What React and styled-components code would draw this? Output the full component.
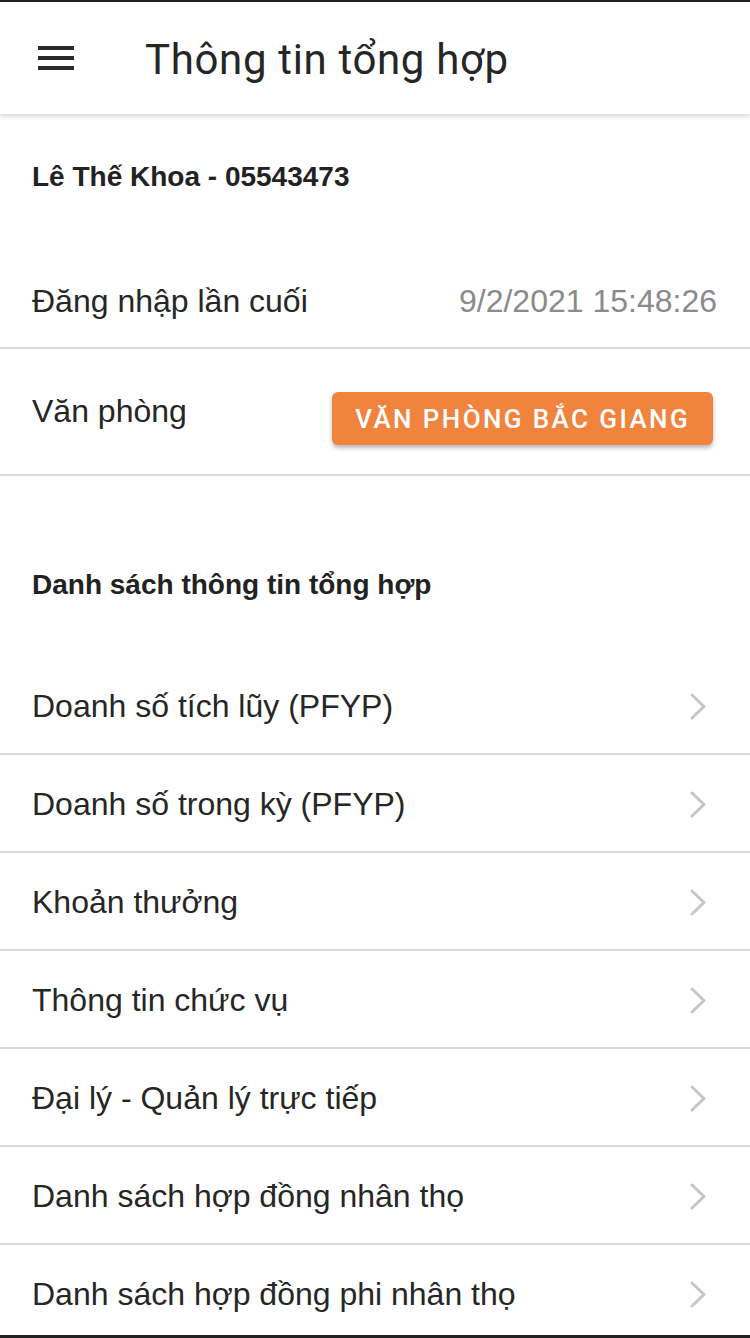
import React from 'react'
import styled, { createGlobalStyle } from 'styled-components'

const TEXT = '#262626'
const LINE = '#dadada'
const ORANGE = '#f0843f'

const GlobalStyle = createGlobalStyle`
  html, body {
    margin: 0;
    padding: 0;
    background: #ffffff;
  }
  body {
    font-family: "Liberation Sans", Arial, sans-serif;
    color: ${TEXT};
  }
`

const Frame = styled.div`
  height: 1338px;
  box-sizing: border-box;
  border-top: 2px solid #222;
  border-bottom: 3px solid #222;
  overflow: hidden;
  display: flex;
  flex-direction: column;
  background: #fff;
`

const Toolbar = styled.header`
  flex: none;
  height: 112px;
  display: flex;
  align-items: center;
  padding-left: 38px;
  background: #fff;
  box-shadow: 0 2px 5px rgba(0, 0, 0, 0.18);
  position: relative;
  z-index: 1;
`

const MenuButton = styled.button`
  width: 36px;
  height: 24px;
  padding: 0;
  border: 0;
  background: transparent;
  display: flex;
  flex-direction: column;
  justify-content: space-between;
  cursor: pointer;

  span {
    display: block;
    height: 4px;
    background: #2a2a2a;
  }
`

const Title = styled.h1`
  margin: 2px 0 0 71px;
  font-family: Roboto, "Liberation Sans", sans-serif;
  font-weight: 400;
  font-size: 42px;
  color: #262626;
  letter-spacing: 0.65px;
`

const Body = styled.main`
  flex: 1;
  display: flex;
  flex-direction: column;
`

const Heading = styled.div`
  padding: ${({ top }) => top}px 32px ${({ bottom }) => bottom}px;
  font-weight: 700;
  font-size: 28px;
  line-height: 30px;
  color: #222;
`

const InfoRow = styled.div`
  height: ${({ height }) => height}px;
  display: flex;
  align-items: center;
  justify-content: space-between;
  padding: 0 33px 0 32px;
  border-bottom: 2px solid ${LINE};
`

const Label = styled.span`
  font-size: 32px;
  color: ${TEXT};
`

const Value = styled.span`
  font-size: 32px;
  color: #8a8a8a;
`

const OfficeButton = styled.button`
  margin: 14px 4px 0 0;
  height: 53px;
  padding: 0 23px;
  border: 0;
  border-radius: 6px;
  background: ${ORANGE};
  color: #fff;
  font-family: Roboto, "Liberation Sans", sans-serif;
  font-weight: 500;
  font-size: 26px;
  letter-spacing: 2.4px;
  text-transform: uppercase;
  box-shadow: 0 3px 4px rgba(0, 0, 0, 0.28);
  cursor: pointer;
`

const List = styled.ul`
  list-style: none;
  margin: 0;
  padding: 0;
`

const Item = styled.li`
  display: flex;
  align-items: center;
  justify-content: space-between;
  padding: 3px 44px 0 32px;
  height: 93px;
  border-bottom: 2px solid ${LINE};
  font-size: 32px;
  color: ${TEXT};
`

const Chevron = () => (
  <svg width="16" height="27" viewBox="0 0 16 27" fill="none">
    <polyline
      points="2,2 14,13.5 2,25"
      stroke="#c6c6c6"
      strokeWidth="3"
      strokeLinecap="round"
      strokeLinejoin="round"
    />
  </svg>
)

const items = [
  'Doanh số tích lũy (PFYP)',
  'Doanh số trong kỳ (PFYP)',
  'Khoản thưởng',
  'Thông tin chức vụ',
  'Đại lý - Quản lý trực tiếp',
  'Danh sách hợp đồng nhân thọ',
  'Danh sách hợp đồng phi nhân thọ',
]

export default function App() {
  return (
    <>
      <GlobalStyle />
      <Frame>
        <Toolbar>
          <MenuButton aria-label="menu">
            <span />
            <span />
            <span />
          </MenuButton>
          <Title>Thông tin tổng hợp</Title>
        </Toolbar>
        <Body>
          <Heading top={48} bottom={63}>Lê Thế Khoa - 05543473</Heading>
          <InfoRow height={92}>
            <Label>Đăng nhập lần cuối</Label>
            <Value>9/2/2021 15:48:26</Value>
          </InfoRow>
          <InfoRow height={125}>
            <Label>Văn phòng</Label>
            <OfficeButton>Văn phòng Bắc Giang</OfficeButton>
          </InfoRow>
          <Heading top={94} bottom={57}>Danh sách thông tin tổng hợp</Heading>
          <List>
            {items.map((text) => (
              <Item key={text}>
                <span>{text}</span>
                <Chevron />
              </Item>
            ))}
          </List>
        </Body>
      </Frame>
    </>
  )
}
